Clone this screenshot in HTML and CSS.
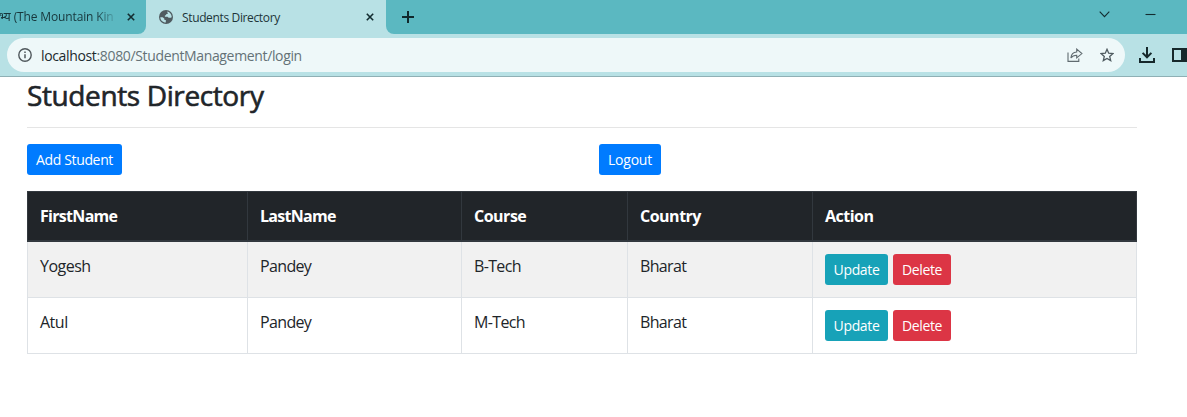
FILE: index.html
```html
<!DOCTYPE html>
<html lang="en">
<head>
<meta charset="utf-8">
<title>Students Directory</title>
<link rel="stylesheet" href="styles.css">
</head>
<body>
<header class="browser">
  <div class="tab-strip">
    <div class="tab tab-back">
      <span class="tab-label faded"><span class="hindi">भ्य</span> (The Mountain Kin</span>
      <svg class="close" viewBox="0 0 8 8"><path d="M.8.8l6.4 6.4M7.2.8L.8 7.2"/></svg>
    </div>
    <div class="tab tab-active">
      <svg class="globe" viewBox="0 0 14 14"><circle cx="7" cy="7" r="7" fill="#4f5b60"/><path d="M1.3 7.2h2.4l1.700 1.600v1.100h1.400v2.600C3.800 12.500 1.300 10 1.300 7.200zM8.200 1.500c2.400.5 4.200 2.400 4.500 4.900-.1.800-.4 1.300-1 1.300H9.600L8.500 6.800H5.900V5.500l1.300-.4V3.900h1.600z" fill="#b8e1e5"/></svg>
      <span class="tab-label">Students Directory</span>
      <svg class="close" viewBox="0 0 8 8"><path d="M.8.8l6.4 6.4M7.2.8L.8 7.2"/></svg>
    </div>
    <svg class="plus" viewBox="0 0 12 12"><path d="M6 0v12M0 6h12"/></svg>
    <div class="window-controls">
      <svg width="11" height="7" viewBox="0 0 11 7"><path d="M.7.7l4.800 5 4.800-5"/></svg>
      <svg width="11" height="7" viewBox="0 0 11 7"><path d="M.5 3.500h10"/></svg>
    </div>
  </div>
  <div class="toolbar">
    <div class="address">
      <svg class="info" viewBox="0 0 14 14"><circle cx="7" cy="7" r="6.200" fill="none" stroke="#50585c" stroke-width="1.400"/><path d="M7 6.200v4M7 3.600v1.500" stroke="#50585c" stroke-width="1.500"/></svg>
      <span class="url"><span class="host">localhost</span>:8080/StudentManagement/login</span>
      <svg class="share" viewBox="0 0 16 14" fill="none" stroke="#606b70" stroke-width="1.100"><path d="M1 4.500v8.900h10.800v-2.800M3.900 10C4.200 6.500 6 4.200 9.700 4V1.100l5.200 4.500-5.200 4.300V7.200C7 7.200 5.200 8 3.900 10z"/></svg>
      <svg class="star" viewBox="0 0 14 14" fill="none" stroke="#4f5b60" stroke-width="1.300"><path d="M7 1.300l1.700 3.900 4.200.4-3.200 2.800 1 4.200L7 10.400l-3.700 2.200 1-4.200L1.100 5.600l4.200-.4z"/></svg>
    </div>
    <svg class="download" viewBox="0 0 16 16" fill="none" stroke="#16282b" stroke-width="2"><path d="M8 0v10M3.600 5.900L8 10.300l4.400-4.400M1 11v4h14v-4"/></svg>
    <svg class="panel" viewBox="0 0 15 14"><path d="M1 1h13v12H1z" fill="none" stroke="#16282b" stroke-width="2"/><path d="M9 0h6v14H9z" fill="#16282b"/></svg>
  </div>
</header>
<main class="page">
  <h3 class="title">Students Directory</h3>
  <hr class="rule">
  <div class="actions">
    <a class="btn primary add">Add Student</a>
    <a class="btn primary logout">Logout</a>
  </div>
  <table class="students">
    <colgroup><col class="c1"><col class="c2"><col class="c3"><col class="c4"><col class="c5"></colgroup>
    <thead>
      <tr><th>FirstName</th><th>LastName</th><th>Course</th><th>Country</th><th>Action</th></tr>
    </thead>
    <tbody>
      <tr><td>Yogesh</td><td>Pandey</td><td>B-Tech</td><td>Bharat</td><td><div class="row-actions"><a class="btn info-btn">Update</a><a class="btn danger">Delete</a></div></td></tr>
      <tr><td>Atul</td><td>Pandey</td><td>M-Tech</td><td>Bharat</td><td><div class="row-actions"><a class="btn info-btn">Update</a><a class="btn danger">Delete</a></div></td></tr>
    </tbody>
  </table>
</main>
</body>
</html>
```
FILE: styles.css
```css
* { box-sizing: border-box; }
body {
  margin: 0;
  width: 1187px;
  height: 417px;
  overflow: hidden;
  background: #fff;
  color: #212529;
  font-family: "Open Sans", "Noto Sans", sans-serif;
}
svg { display: block; flex: none; }

.browser { height: 77px; background: #b8e1e5; border-bottom: 1px solid #8fb0b5; }
.tab-strip { display: flex; align-items: center; height: 34px; background: linear-gradient(90deg, #5bb8c1 0 130px, #b8e1e5 130px 394px, #5bb8c1 394px); }
.tab { display: flex; align-items: center; height: 34px; font-size: 12px; color: #17363b; }
.tab-back { width: 146px; padding-right: 11px; border-radius: 0 0 8px 0; background: #5bb8c1; }
.tab-back .tab-label { width: 116px; margin-right: auto; overflow: hidden; white-space: pre; }
.faded { letter-spacing: -0.14px; mask-image: linear-gradient(90deg, #000 96px, transparent 118px); }
.hindi { margin-left: -1px; font-family: "Noto Sans Devanagari", "Noto Sans", sans-serif; }
.tab-active { width: 240px; padding: 0 12px 0 13px; border-radius: 8px 8px 0 0; background: #b8e1e5; }
.tab-active .tab-label { margin: 0 auto 0 9px; letter-spacing: -0.36px; color: #1d3539; }
.globe { width: 14px; height: 14px; }
.close { width: 8px; height: 8px; fill: none; stroke: #132c30; stroke-width: 1.6; }
.plus { width: 28px; height: 34px; padding: 11px 0 11px 16px; border-radius: 0 0 0 8px; background: #5bb8c1; fill: none; stroke: #10282c; stroke-width: 2; }
.window-controls { display: flex; gap: 35px; margin: 0 31px 6px auto; fill: none; stroke: #142c30; stroke-width: 1.1; }

.toolbar { display: flex; align-items: center; height: 42px; padding-left: 7px; }
.address { display: flex; align-items: center; width: 1118px; height: 34px; padding: 0 11px; border-radius: 17px; background: #eef8f9; }
.info { width: 14px; height: 14px; }
.url { margin: 0 auto 0 9px; font-size: 14px; color: #647277; letter-spacing: -0.35px; }
.host { color: #1c2a2e; }
.share { width: 16px; height: 14px; margin-right: 17px; }
.star { width: 14px; height: 14px; }
.download { width: 16px; height: 16px; margin-left: 14px; }
.panel { width: 15px; height: 14px; margin-left: 17px; }

.page { width: 1137px; padding: 1px 0 0 27px; }
.title { margin: 0; font-size: 28px; line-height: 34px; font-weight: 500; letter-spacing: -0.38px; -webkit-text-stroke: 0.6px #212529; }
.rule { height: 1px; margin: 15px 0 16px; border: 0; background: #e5e5e5; }
.actions { display: flex; height: 47px; }
.btn { display: flex; align-items: center; justify-content: center; height: 31px; border-radius: 3px; color: #fff; font-size: 14px; line-height: 21px; letter-spacing: -0.35px; }
.primary { background: #007bff; }
.add { width: 95px; }
.logout { width: 62px; margin-left: 477px; letter-spacing: -0.2px; }

.students { width: 1110px; table-layout: fixed; border-collapse: collapse; font-size: 16px; line-height: 24px; }
.c1 { width: 220px; }
.c2 { width: 214px; }
.c3 { width: 166px; }
.c4 { width: 185px; }
.c5 { width: 324px; }
.students th { padding: 12px; border: 1px solid #32383e; border-bottom-width: 2px; background: #212529; color: #fff; text-align: left; font-weight: 700; line-height: 24px; letter-spacing: -0.7px; }
.students th:nth-child(n+3) { letter-spacing: -0.5px; }
.students td { height: 56px; padding: 12px; border: 1px solid #dee2e6; vertical-align: top; letter-spacing: -0.65px; }
.students td:nth-child(1) { letter-spacing: -0.5px; }
.students tbody tr:first-child { background: #f1f1f1; }
.row-actions { display: flex; gap: 5px; }
.info-btn { width: 63px; background: #17a2b8; }
.danger { width: 58px; background: #dc3545; }
```
